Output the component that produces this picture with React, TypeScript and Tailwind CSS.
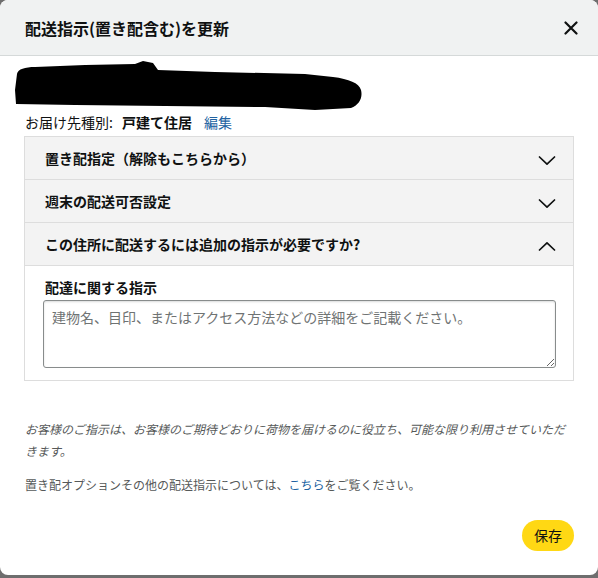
import React from "react";

const font = { fontFamily: '"Noto Sans CJK JP", "Noto Sans", sans-serif' };

function Chevron({ up }: { up?: boolean }) {
  return (
    <svg width="18" height="10" viewBox="0 0 18 10" className={up ? "shrink-0 mt-[3px]" : "shrink-0 mt-[5px]"}>
      <path
        d={up ? "M1.5 9 L9 1.8 L16.5 9" : "M1.5 1 L9 8.2 L16.5 1"}
        fill="none"
        stroke="#0f1111"
        strokeWidth="1.7"
        strokeLinecap="round"
        strokeLinejoin="round"
      />
    </svg>
  );
}

function Row({ label, up }: { label: string; up?: boolean }) {
  return (
    <div className="h-[43px] bg-[#f3f3f3] border-b border-[#dddddd] flex items-center justify-between pl-[20px] pr-[17px]">
      <span className="text-[14px] font-bold text-[#0f1111]">{label}</span>
      <Chevron up={up} />
    </div>
  );
}

export default function App() {
  return (
    <div className="w-[598px] h-[578px] bg-[#6e6e6e]" style={font}>
      <div className="h-[575px] bg-white rounded-[8px] overflow-hidden flex flex-col">
        <div className="h-[56px] shrink-0 bg-[#f0f2f2] border-b border-[#d5d9d9] flex items-center justify-between pl-[25px] pr-[20px]">
          <span className="text-[16px] font-bold text-[#0f1111]">配送指示(置き配含む)を更新</span>
          <svg width="14" height="14" viewBox="0 0 14 14">
            <path d="M1.5 1.5 L12.5 12.5 M12.5 1.5 L1.5 12.5" stroke="#0f1111" strokeWidth="2.2" strokeLinecap="round" />
          </svg>
        </div>
        <div className="flex-1 flex flex-col px-[24px] pb-[24px]">
          <svg width="350" height="52" viewBox="0 0 350 52" className="-ml-[9px] mt-[4px] shrink-0">
            <path
              d="M2 14 C3 9 10 7 20 7 L70 5 L120 4 L128 1 L138 3 L143 10 L200 12 L290 14 L318 17 C334 19 344 23 346 30 C348 38 344 45 336 48 L300 50 L250 47 L150 46 L60 45 L1 44 L0 30 Z"
              fill="#000"
            />
          </svg>
          <div className="h-[20px] flex items-center text-[14px] text-[#0f1111] leading-[20px] pl-[1px]">
            <span>お届け先種別:</span>
            <span className="font-bold ml-[9px]">戸建て住居</span>
            <span className="ml-[12px] text-[#2162a1]">編集</span>
          </div>
          <div className="mt-[4px] border border-[#dddddd]">
            <Row label="置き配指定（解除もこちらから）" />
            <Row label="週末の配送可否設定" />
            <Row label="この住所に配送するには追加の指示が必要ですか?" up />
            <div className="bg-white pt-[11px] pb-[12px] pl-[18px] pr-[17px]">
              <div className="text-[14px] font-bold text-[#0f1111] leading-[20px] pl-[2px]">配達に関する指示</div>
              <textarea
                className="mt-[3px] block w-full h-[68px] border border-[#888c8c] rounded-[3px] px-[8px] pt-[6px] text-[14px] leading-[20px] text-[#0f1111] placeholder:text-[#6f7373] outline-none shadow-[inset_0_1px_2px_rgba(15,17,17,0.15)]"
                style={font}
                placeholder="建物名、目印、またはアクセス方法などの詳細をご記載ください。"
              />
            </div>
          </div>
          <p className="mt-[37px] text-[12px] italic leading-[22px] text-[#565959] pl-[1px] pr-[1px]">
            お客様のご指示は、お客様のご期待どおりに荷物を届けるのに役立ち、可能な限り利用させていただきます。
          </p>
          <p className="mt-[12px] text-[12px] leading-[22px] text-[#565959] pl-[1px]">
            置き配オプションその他の配送指示については、<span className="text-[#2162a1]">こちら</span>をご覧ください。
          </p>
          <div className="flex-1" />
          <div className="flex justify-end">
            <button className="h-[31px] w-[52px] rounded-full bg-[#ffd814] text-[14px] text-[#0f1111] flex items-center justify-center" style={font}>
              保存
            </button>
          </div>
        </div>
      </div>
    </div>
  );
}
